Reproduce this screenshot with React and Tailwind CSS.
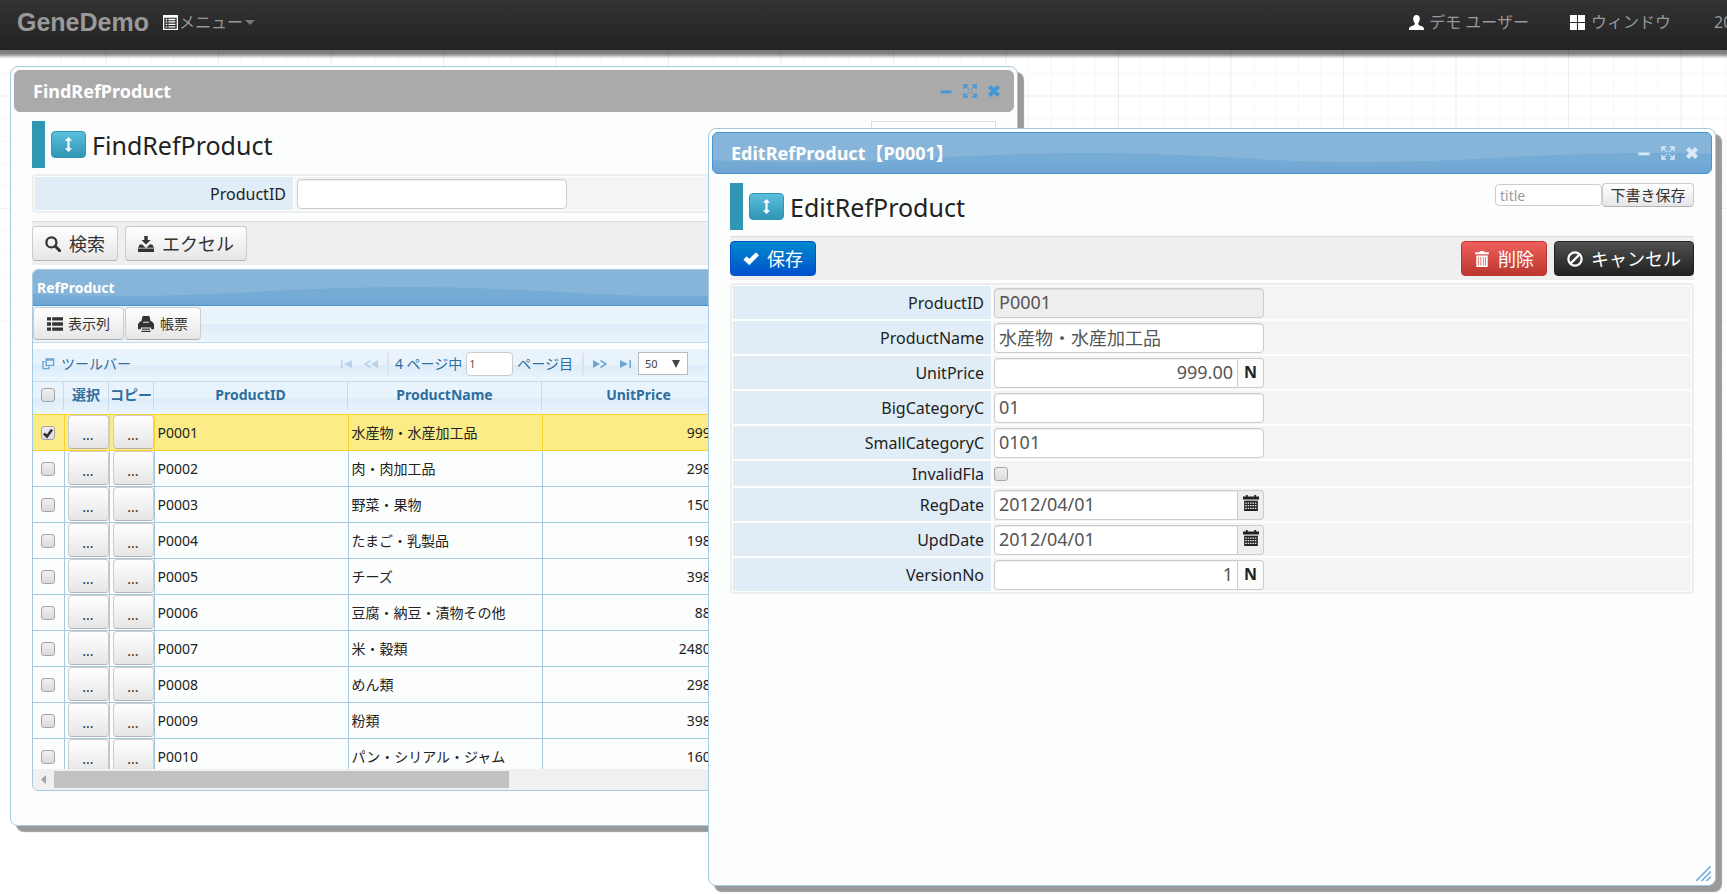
import React, { useState } from 'react';

const products = [
  { id: 'P0001', name: '水産物・水産加工品', price: '999.00' },
  { id: 'P0002', name: '肉・肉加工品', price: '298.00' },
  { id: 'P0003', name: '野菜・果物', price: '150.00' },
  { id: 'P0004', name: 'たまご・乳製品', price: '198.00' },
  { id: 'P0005', name: 'チーズ', price: '398.00' },
  { id: 'P0006', name: '豆腐・納豆・漬物その他', price: '88.00' },
  { id: 'P0007', name: '米・穀類', price: '2480.00' },
  { id: 'P0008', name: 'めん類', price: '298.00' },
  { id: 'P0009', name: '粉類', price: '398.00' },
  { id: 'P0010', name: 'パン・シリアル・ジャム', price: '160.00' },
];

const fields = [
  { name: 'ProductID', value: 'P0001', type: 'readonly' },
  { name: 'ProductName', value: '水産物・水産加工品', type: 'text' },
  { name: 'UnitPrice', value: '999.00', type: 'number' },
  { name: 'BigCategoryC', value: '01', type: 'text' },
  { name: 'SmallCategoryC', value: '0101', type: 'text' },
  { name: 'InvalidFla', value: false, type: 'check' },
  { name: 'RegDate', value: '2012/04/01', type: 'date' },
  { name: 'UpdDate', value: '2012/04/01', type: 'date' },
  { name: 'VersionNo', value: '1', type: 'number' },
];

// 14x14 glyphs
const glyphs = {
  list: (
    <>
      <path fillRule="evenodd" d="M0 0h14v14H0zM1.200 2.500v10.300h11.600V2.500z" />
      <path d="M2.500 3.500h1.500v1.300H2.500zM5 3.500h6.500v1.300H5zM2.500 5.800h1.500v1.300H2.500zM5 5.800h6.500v1.300H5zM2.500 8.100h1.500v1.300H2.500zM5 8.100h6.500v1.300H5zM2.500 10.400h1.500v1.300H2.500zM5 10.400h6.500v1.300H5z" />
    </>
  ),
  user: <path d="M7 0C4.9 0 3.8 1.500 3.900 3.800c.1 1.600.7 2.900 1.400 3.700.2 1 0 1.600-.7 2L1 10.900c-.7.4-1 1-1 3.100h14c0-2.100-.3-2.700-1-3.100L9.400 9.500c-.7-.4-.9-1-.7-2 .7-.8 1.300-2.100 1.400-3.700C10.200 1.500 9.100 0 7 0z" />,
  windows: <path d="M0 0h6.500v6.500H0zM7.500 0H14v6.500H7.500zM0 7.500h6.500V14H0zM7.500 7.500H14V14H7.500z" />,
  search: (
    <>
      <circle cx="5.600" cy="5.600" r="4.400" fill="none" stroke="currentColor" strokeWidth="2" />
      <path d="M8.800 8.800l4 4" stroke="currentColor" strokeWidth="2.600" strokeLinecap="round" />
    </>
  ),
  download: <path d="M5.500 0h3v3.500H11L7 7.500 3 3.500h2.500zM1.500 7.500h2.300L7 10.700l3.200-3.200h2.300L14 10.300H0zM0 11h14v3H0z" />,
  rows: <path d="M0 1h3.500v3H0zM4.500 1H14v3H4.500zM0 5.500h3.500v3H0zM4.500 5.500H14v3H4.500zM0 10h3.500v3H0zM4.500 10H14v3H4.500z" />,
  print: <path fillRule="evenodd" d="M4 0h6l1 4.500h1L14 7v4.500h-2.500V10h-9v1.500H0V7l2-2.500h1zM4.500 5v1h5V5zM3.500 11h7v1h-7zM3 13h8v1H3z" />,
  check: <path d="M1 7.500L3.200 5.300 5.500 7.500 11.300 1.800 13.300 3.800 5.500 11.700z" stroke="currentColor" strokeLinejoin="round" />,
  trash: (
    <>
      <path d="M5 0h4v1.200h4v1.600H1V1.200h4z" />
      <path fillRule="evenodd" d="M2 4h10v10H2zM3.600 5.200v7.500h.6V5.200zM5.700 5.200v7.500h.6V5.200zM7.800 5.200v7.500h.6V5.200zM9.900 5.200v7.500h.6V5.200z" />
    </>
  ),
  ban: (
    <g fill="none" stroke="currentColor" strokeWidth="2">
      <circle cx="7" cy="7" r="5.800" />
      <path d="M3.200 10.800l7.600-7.600" />
    </g>
  ),
  calendar: (
    <>
      <path d="M2.500 0h1.600v1.300h5.800V0h1.600v1.300H14V4H0V1.300h2.500z" />
      <path d="M1 5h12v9H1z" />
      <path d="M2 7.200h10M2 9.400h10M2 11.600h10" stroke="#eee" strokeWidth="1.100" strokeDasharray="1.300 0.800" />
    </>
  ),
  updown: <path d="M7 0l3.400 3.500H8v7h2.400L7 14l-3.400-3.500H6v-7H3.600z" />,
  minus: <path d="M1.500 6.500h11v2.700h-11z" />,
  expand: (
    <g fill="none" stroke="currentColor" strokeWidth="1.500">
      <path d="M1 5V1h4M9 1h4v4M13 9v4H9M5 13H1V9" />
      <path d="M1.500 1.500l4.300 4.300M12.500 1.500L8.200 5.800M12.500 12.500L8.200 8.200M1.500 12.500l4.300-4.300" strokeDasharray="4 1" />
    </g>
  ),
  close: <path d="M2.500 2.500l9 9M11.500 2.500l-9 9" stroke="currentColor" strokeWidth="4.200" />,
  copy: (
    <g fill="none" stroke="currentColor" strokeWidth="1.500">
      <path d="M4.500 2h8v7h-8zM4.500 3.200h8" />
      <path d="M3 5H1v7.500h6.500V10" />
    </g>
  ),
  first: <path d="M1 3h1.600v8H1zM12 3v8L4 7z" />,
  prev: (
    <>
      <path d="M14 3v8L7 7z" />
      <path d="M6.500 3.500L1 7l5.500 3.500" fill="none" stroke="currentColor" strokeWidth="1.500" />
    </>
  ),
  next: (
    <>
      <path d="M0 3v8l7-4z" />
      <path d="M7.500 3.500L13 7l-5.500 3.500" fill="none" stroke="currentColor" strokeWidth="1.500" />
    </>
  ),
  last: <path d="M2 3v8l8-4zM11.400 3H13v8h-1.600z" />,
};

function Glyph({ name, className = 'size-4' }) {
  return (
    <svg viewBox="0 0 14 14" fill="currentColor" className={`shrink-0 ${className}`} aria-hidden="true">
      {glyphs[name]}
    </svg>
  );
}

// blue bar with the glossy wave, shared by window and grid headers
function Wave({ id, top }) {
  return (
    <svg className="absolute inset-0 size-full" aria-hidden="true">
      <defs>
        <linearGradient id={`${id}-fade`} x1="0" y1="0" x2="0" y2="1">
          <stop offset="0.2" stopColor="#75acd6" />
          <stop offset="0.5" stopColor="#6da3d1" />
        </linearGradient>
        <pattern id={id} width="562" height="60" patternUnits="userSpaceOnUse" y={top}>
          <path d="M0 27C60 30 130 30 220 25C300 20 380 19 440 21C500 23 530 25 562 27V60H0z" fill={`url(#${id}-fade)`} />
        </pattern>
      </defs>
      <rect width="100%" height="100%" fill={`url(#${id})`} />
    </svg>
  );
}

function GraphPaper() {
  return (
    <svg className="absolute inset-0 size-full" aria-hidden="true">
      <defs>
        <pattern id="paper" x="-7" y="-17" width="112.5" height="112.5" patternUnits="userSpaceOnUse">
          <path d="M23 0v113M45.500 0v113M68 0v113M90.500 0v113M0 23h113M0 45.500h113M0 68h113M0 90.500h113" stroke="#f7f7f7" />
          <path d="M.5 0v113M0 .5h113" stroke="#ededed" strokeWidth="1" />
        </pattern>
        <linearGradient id="paper-fade" x1="0" y1="0" x2="0" y2="1">
          <stop offset="0.15" stopColor="#fff" stopOpacity="0" />
          <stop offset="0.55" stopColor="#fff" />
        </linearGradient>
      </defs>
      <rect width="100%" height="100%" fill="url(#paper)" />
      <rect width="100%" height="100%" fill="url(#paper-fade)" />
    </svg>
  );
}

const variants = {
  light: 'border-[#ccc] border-b-[#b3b3b3] bg-linear-to-b from-white to-[#e6e6e6] text-[#333]',
  primary: 'border-[#0055cc] bg-linear-to-b from-[#0088cc] to-[#0050cc] text-white',
  danger: 'border-[#bd362f] bg-linear-to-b from-[#ee5f5b] to-[#bd362f] text-white',
  dark: 'border-[#222] bg-linear-to-b from-[#505050] to-[#222] text-white',
};

function Button({ icon, variant = 'light', className = 'h-[35px] px-[12px] text-[18px]', children }) {
  return (
    <button type="button" className={`flex items-center justify-center gap-2 rounded border leading-none whitespace-nowrap ${variants[variant]} ${className}`}>
      {icon && <Glyph name={icon} />}
      {children}
    </button>
  );
}

function Checkbox({ checked = false, ...props }) {
  const [on, setOn] = useState(checked);
  return (
    <span className="relative inline-flex size-[14px] align-middle">
      <input
        type="checkbox"
        checked={on}
        onChange={(e) => setOn(e.target.checked)}
        className="size-[14px] appearance-none rounded-[3px] border border-[#a5a5a5] bg-linear-to-b from-[#eee] to-[#dcdcdc]"
        {...props}
      />
      {on && (
        <svg viewBox="0 0 14 14" className="pointer-events-none absolute inset-0 size-[14px]" aria-hidden="true">
          <path d="M3 7.500L6 10.500 11 3.500" fill="none" stroke="#333" strokeWidth="2.600" />
        </svg>
      )}
    </span>
  );
}

function Window({ id, title, active = false, className, children }) {
  return (
    <section className={`absolute flex flex-col rounded-lg border border-[#a6c9e2] bg-[#fcfdfd] p-[3px] ${className}`}>
      <header
        className={`relative flex h-[42px] shrink-0 items-center overflow-hidden rounded-md border px-[18px] ${
          active ? 'border-[#4297d7] bg-[#87b5d9]' : 'border-[#aaa] bg-[#aaa]'
        }`}
      >
        {active && <Wave id={id} top={0} />}
        <h2 className="relative flex-1 pb-px text-[18px] leading-6 font-bold text-white">{title}</h2>
        <div className={`relative -mr-[6px] flex gap-[10px] ${active ? 'text-[#dce9f6]' : 'text-[#4297d7]'}`}>
          <button type="button" aria-label="minimize"><Glyph name="minus" className="size-[14px]" /></button>
          <button type="button" aria-label="maximize"><Glyph name="expand" className="size-[14px]" /></button>
          <button type="button" aria-label="close"><Glyph name="close" className="size-[14px]" /></button>
        </div>
      </header>
      <div className="mt-[9px] px-[18px]">{children}</div>
    </section>
  );
}

function Heading({ children }) {
  return (
    <div className="flex h-[47px] items-center border-l-[13px] border-[#2f96b4] pl-[6px]">
      <button type="button" aria-label="toggle" className="flex h-[27px] w-[35px] items-center justify-center rounded border border-[#2f96b4] bg-linear-to-b from-[#5bc0de] to-[#2f96b4] text-white">
        <Glyph name="updown" className="size-[15px]" />
      </button>
      <h1 className="ml-[6px] text-[25px] leading-8 text-[#222]">{children}</h1>
    </div>
  );
}

function Draft({ id }) {
  return (
    <div className="flex h-6 self-start">
      <input id={id} aria-label="title" placeholder="title" className="mt-px h-[22px] w-[107px] rounded border border-[#ccc] bg-white px-1 text-[14px] placeholder:text-[#999]" />
      <Button className="h-6 w-[92px] text-[15px]">下書き保存</Button>
    </div>
  );
}

function FormRow({ id, label, height = 'h-[33px]', children }) {
  return (
    <div className={`flex gap-[2px] ${height}`}>
      <label htmlFor={id} className="flex w-[258px] items-center justify-end bg-[#e1edf6] pr-[7px] text-[16px] text-[#222]">
        {label}
      </label>
      <div className="flex flex-1 items-center bg-[#f4f4f4] pl-px">{children}</div>
    </div>
  );
}

const inputClass = 'h-[30px] border border-[#ccc] px-[4px] pb-[2px] text-[18px] text-[#555] shadow-[inset_0_1px_1px_rgba(0,0,0,0.075)]';

function Field({ field }) {
  const id = `edit-${field.name}`;
  if (field.type === 'check') {
    return (
      <FormRow id={id} label={field.name} height="h-[25px]">
        <Checkbox id={id} />
      </FormRow>
    );
  }
  if (field.type === 'number' || field.type === 'date') {
    const number = field.type === 'number';
    return (
      <FormRow id={id} label={field.name}>
        <input id={id} defaultValue={field.value} className={`w-[244px] rounded-l bg-white ${inputClass} ${number ? 'text-right' : ''}`} />
        <button
          type="button"
          aria-label={number ? undefined : 'calendar'}
          className={`flex h-[30px] w-[26px] justify-center rounded-r border border-l-0 border-[#ccc] text-[16px] text-[#222] ${number ? 'items-center bg-[#fbfbfb] pb-[2px] font-bold' : 'items-start bg-[#eee] pt-1'}`}
        >
          {number ? 'N' : <Glyph name="calendar" />}
        </button>
      </FormRow>
    );
  }
  const readOnly = field.type === 'readonly';
  return (
    <FormRow id={id} label={field.name}>
      <input id={id} defaultValue={field.value} readOnly={readOnly} className={`w-[270px] rounded ${inputClass} ${readOnly ? 'bg-[#eee]' : 'bg-white'}`} />
    </FormRow>
  );
}

const band = 'bg-[linear-gradient(#e9f3fc_50%,#dcecf9_50%,#ebf5fd)]';

function Pager() {
  return (
    <div className={`grid h-[33px] grid-cols-[1fr_auto_1fr] items-center border-b border-[#c5dbec] pb-[3px] text-[14px] text-[#2e6e9e] ${band}`}>
      <a href="#toolbar" className="flex items-center gap-[6px] pl-[9px]">
        <Glyph name="copy" className="size-[13px] text-[#6da8d5]" />
        ツールバー
      </a>
      <div className="flex items-center text-[#6da8d5]">
        <button type="button" aria-label="first" className="opacity-40"><Glyph name="first" className="size-[14px]" /></button>
        <button type="button" aria-label="previous" className="ml-[10px] opacity-40"><Glyph name="prev" className="size-[14px]" /></button>
        <span className="mr-[6px] ml-[9px] h-[22px] w-[2px] bg-[#dfe3e8]" />
        <label htmlFor="page" className="text-[#2e6e9e]">4 ページ中</label>
        <input id="page" defaultValue="1" className="mx-1 h-6 w-[47px] rounded border border-[#ccc] bg-white px-[2px] text-[11px] text-[#555]" />
        <span className="text-[#2e6e9e]">ページ目</span>
        <span className="mx-[9px] h-[22px] w-[2px] bg-[#dfe3e8]" />
        <button type="button" aria-label="next"><Glyph name="next" className="size-[14px]" /></button>
        <button type="button" aria-label="last" className="ml-[11px]"><Glyph name="last" className="size-[14px]" /></button>
        <span className="relative ml-[6px]">
          <select aria-label="rows" defaultValue="50" className="h-[23px] w-[50px] appearance-none border border-[#bbb] bg-white pl-[6px] text-[11px] text-[#444]">
            <option>50</option>
            <option>100</option>
          </select>
          <svg viewBox="0 0 8 8" className="pointer-events-none absolute top-2 right-2 size-2 fill-[#444]" aria-hidden="true">
            <path d="M0 0h8L4 8z" />
          </svg>
        </span>
      </div>
      <div />
    </div>
  );
}

function HeadCell({ className, children }) {
  return (
    <th className={`p-0 text-[14px] font-bold text-[#2e6e9e] ${className}`}>
      <div className="mb-[3px] flex h-7 items-center justify-center border-r border-[#c5dbec] pb-[3px] whitespace-nowrap">{children}</div>
    </th>
  );
}

function ProductTable() {
  return (
    <div className="h-[387px] overflow-hidden">
      <table className="w-[703px] table-fixed border-collapse text-[14px] text-[#222]">
        <thead>
          <tr className={`h-8 ${band}`}>
            <HeadCell className="w-[31px]"><Checkbox aria-label="select all" /></HeadCell>
            <HeadCell className="w-[45px]">選択</HeadCell>
            <HeadCell className="w-[45px]">コピー</HeadCell>
            <HeadCell className="w-[194px]">ProductID</HeadCell>
            <HeadCell className="w-[194px]">ProductName</HeadCell>
            <HeadCell className="w-[194px]">UnitPrice</HeadCell>
          </tr>
        </thead>
        <tbody>
          {products.map((p, i) => {
            const cell = `border-r border-t border-b ${i === 0 ? 'border-[#fad42e]' : 'border-[#a6c9e2]'}`;
            return (
              <tr key={p.id} className={`h-9 ${i === 0 ? 'bg-[#fbec88]' : 'bg-[#fcfdfd]'}`}>
                <td className={`p-0 text-center leading-none ${cell}`}><Checkbox checked={i === 0} aria-label={p.id} /></td>
                <td className={`py-0 pr-0 pl-[3px] ${cell}`}><Button className="h-[34px] w-full pt-[5px] text-[14px]">...</Button></td>
                <td className={`py-0 pr-0 pl-[3px] ${cell}`}><Button className="h-[34px] w-full pt-[5px] text-[14px]">...</Button></td>
                <td className={`px-[3px] py-0 ${cell}`}>{p.id}</td>
                <td className={`px-[3px] py-0 ${cell}`}>{p.name}</td>
                <td className={`px-[5px] py-0 text-right ${cell}`}>{p.price}</td>
              </tr>
            );
          })}
        </tbody>
      </table>
    </div>
  );
}

function ProductGrid() {
  return (
    <div className="mt-1 overflow-hidden rounded-md border border-[#a6c9e2]">
      <div className="relative flex h-9 items-center border-b border-[#4297d7] bg-[#87b5d9] px-1">
        <Wave id="grid-wave" top={-3} />
        <h3 className="relative text-[14px] leading-5 font-bold text-white">RefProduct</h3>
      </div>
      <div className={`flex h-[37px] items-start gap-px border-b border-[#c5dbec] pt-px ${band}`}>
        <Button icon="rows" className="h-[33px] w-[91px] gap-[5px] text-[14px]">表示列</Button>
        <Button icon="print" className="h-[33px] w-[76px] gap-[6px] text-[14px]">帳票</Button>
      </div>
      <div className="h-[6px]" />
      <Pager />
      <ProductTable />
      <div className="flex h-[21px] items-center bg-[#f0f0f0] py-[2px]">
        <svg viewBox="0 0 21 17" className="h-[17px] w-[21px] fill-[#a3a3a3]" aria-hidden="true">
          <path d="M13 4v9L8 8.500z" />
        </svg>
        <div className="h-[17px] w-[455px] bg-[#c1c1c1]" />
      </div>
    </div>
  );
}

function NavBar() {
  return (
    <nav className="relative flex h-[50px] items-center bg-linear-to-b from-[#333] to-[#222] pb-[6px] pl-[17px] text-[16px] text-[#999] shadow-[0_4px_3px_2px_rgba(0,0,0,0.5)]">
      <a href="#home" className="text-[25px] leading-8 font-bold font-['Liberation_Sans',sans-serif]">GeneDemo</a>
      <a href="#menu" className="ml-[14px] flex items-center">
        <Glyph name="list" className="mr-px size-[15px] text-white" />
        メニュー
        <svg viewBox="0 0 10 5" className="ml-[2px] h-[5px] w-[10px] fill-[#777]" aria-hidden="true">
          <path d="M0 0h10L5 5z" />
        </svg>
      </a>
      <div className="ml-auto flex">
        <a href="#user" className="flex items-center gap-[5px]">
          <Glyph name="user" className="size-[15px] text-white" />
          デモ ユーザー
        </a>
        <a href="#windows" className="ml-[41px] flex items-center gap-[6px]">
          <Glyph name="windows" className="size-[15px] text-white" />
          ウィンドウ
        </a>
        <span className="ml-[43px] w-[13px] overflow-hidden whitespace-nowrap">20</span>
      </div>
    </nav>
  );
}

export default function App() {
  return (
    <div className="relative h-screen overflow-hidden bg-white font-['Noto_Sans','Noto_Sans_CJK_JP',sans-serif]">
      <GraphPaper />
      <NavBar />

      <Window id="find-wave" title="FindRefProduct" className="top-[66px] left-[10px] h-[760px] w-[1008px] shadow-[6px_6px_1px_#999]">
        <div className="flex justify-between">
          <Heading>FindRefProduct</Heading>
          <div className="h-6 w-[125px] border border-[#ddd] bg-white" />
        </div>
        <div className="mt-[6px] rounded border-2 border-[#eee] p-px">
          <FormRow id="find-id" label="ProductID">
            <input id="find-id" className={`ml-px w-[270px] rounded bg-white ${inputClass}`} />
          </FormRow>
        </div>
        <div className="mt-2 flex h-[44px] gap-[7px] border-t border-[#ddd] bg-[#efefef] pt-1">
          <Button icon="search">検索</Button>
          <Button icon="download">エクセル</Button>
        </div>
        <ProductGrid />
      </Window>

      <Window id="edit-wave" title="EditRefProduct【P0001】" active className="top-[128px] left-[708px] h-[758px] w-[1008px] shadow-[6px_6px_1px_#999]">
        <div className="flex justify-between">
          <Heading>EditRefProduct</Heading>
          <Draft id="draft" />
        </div>
        <div className="mt-[6px] flex h-[44px] gap-[7px] border-t border-[#ddd] bg-[#efefef] pt-1">
          <Button icon="check" variant="primary">保存</Button>
          <span className="flex-1" />
          <Button icon="trash" variant="danger">削除</Button>
          <Button icon="ban" variant="dark">キャンセル</Button>
        </div>
        <form className="mt-[3px] flex flex-col gap-[2px] rounded border-2 border-[#eee] p-px">
          {fields.map((f) => (
            <Field key={f.name} field={f} />
          ))}
        </form>
        <svg viewBox="0 0 15 15" className="absolute right-1 bottom-1 size-[15px]" aria-hidden="true">
          <path d="M0 15L15 0M5.500 15L15 5.500M10.500 15l4.500-4.500" stroke="#6da8d5" strokeWidth="1.500" />
        </svg>
      </Window>
    </div>
  );
}
